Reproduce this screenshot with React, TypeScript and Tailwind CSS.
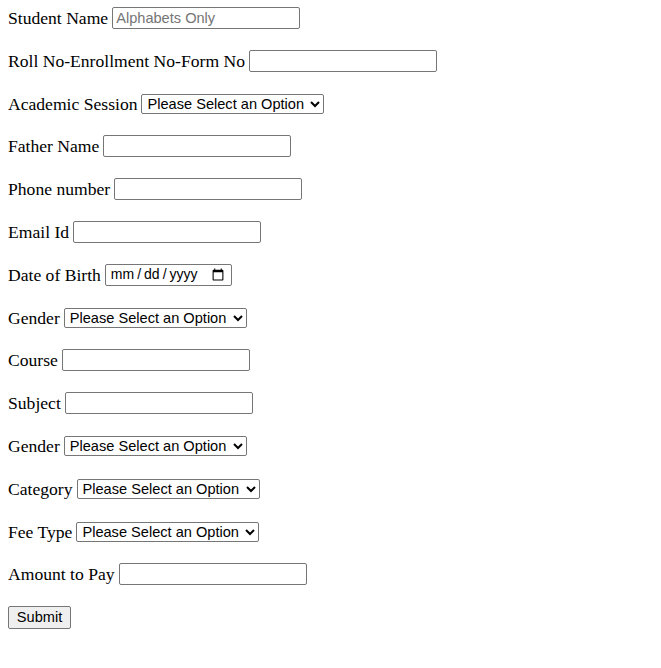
import React from "react";

const inputCls =
  "w-[188px] h-[22px] border border-[#767676] rounded-[2px] px-[3px] text-[14.6px] text-black bg-white placeholder:text-[#757575] [font-family:'Liberation_Sans',Arial,sans-serif]";
const selectCls =
  "w-[183px] h-[20px] border border-[#767676] rounded-[2px] pl-[1px] text-[14.6px] text-black bg-white [font-family:'Liberation_Sans',Arial,sans-serif]";

function Row({ label, children }: { label: string; children: React.ReactNode }) {
  return (
    <div className="flex items-center h-[22px] gap-[4px]">
      <span className="leading-[22px]">{label}</span>
      {children}
    </div>
  );
}

function Sel() {
  return (
    <select className={selectCls} defaultValue="">
      <option value="">Please Select an Option</option>
    </select>
  );
}

export default function App() {
  return (
    <div className="min-h-[668px] bg-white text-black text-[17.6px] [font-family:'Liberation_Serif','Times_New_Roman',serif] pt-[7px] px-[8px] flex flex-col gap-[20.8px]">
      <Row label="Student Name">
        <input className={inputCls} placeholder="Alphabets Only" />
      </Row>
      <Row label="Roll No-Enrollment No-Form No">
        <input className={inputCls} />
      </Row>
      <Row label="Academic Session">
        <Sel />
      </Row>
      <Row label="Father Name">
        <input className={inputCls} />
      </Row>
      <Row label="Phone number">
        <input className={inputCls} />
      </Row>
      <Row label="Email Id">
        <input className={inputCls} />
      </Row>
      <Row label="Date of Birth">
        <input
          type="date"
          className={
            inputCls +
            " !w-[127px] !px-[4px] !text-[14px] [&::-webkit-datetime-edit-text]:px-[2px]"
          }
        />
      </Row>
      <Row label="Gender">
        <Sel />
      </Row>
      <Row label="Course">
        <input className={inputCls} />
      </Row>
      <Row label="Subject">
        <input className={inputCls} />
      </Row>
      <Row label="Gender">
        <Sel />
      </Row>
      <Row label="Category">
        <Sel />
      </Row>
      <Row label="Fee Type">
        <Sel />
      </Row>
      <Row label="Amount to Pay">
        <input className={inputCls} />
      </Row>
      <div className="flex items-center h-[22px]">
        <button className="w-[63px] h-[23px] border border-[#767676] rounded-[2px] bg-[#efefef] text-[14.6px] text-black [font-family:'Liberation_Sans',Arial,sans-serif]">
          Submit
        </button>
      </div>
    </div>
  );
}
